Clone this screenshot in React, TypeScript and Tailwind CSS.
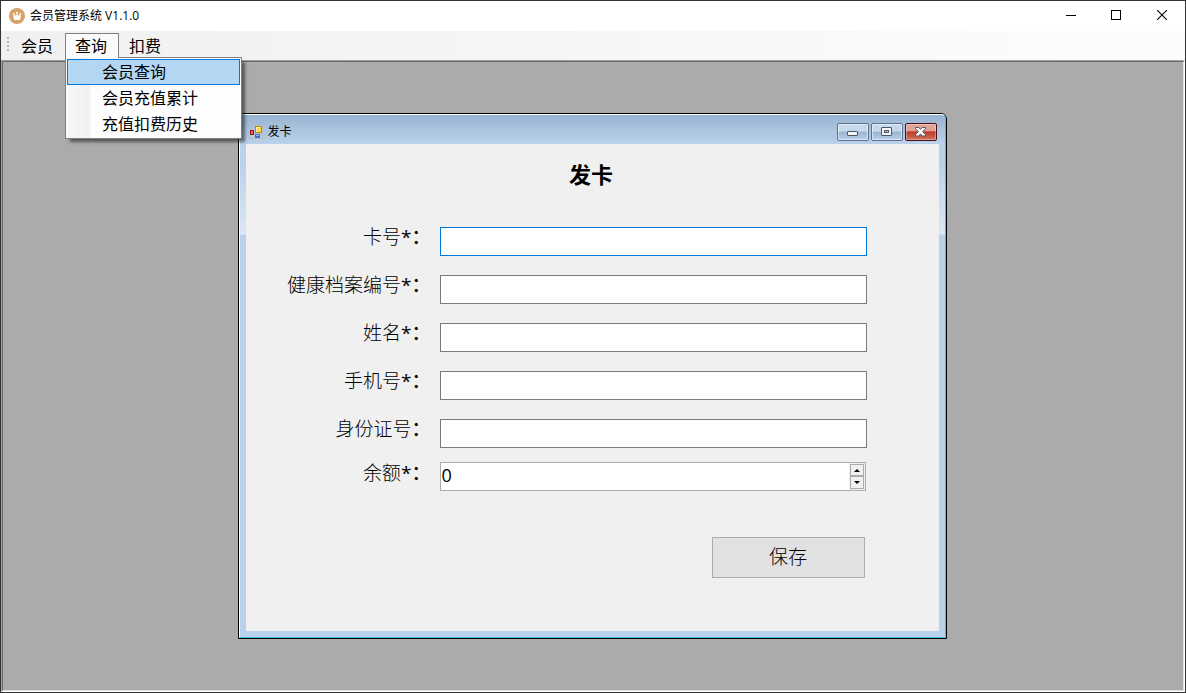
import React, { useState } from 'react';

const menus = ['会员', '查询', '扣费'];

const queryItems = ['会员查询', '会员充值累计', '充值扣费历史'];

const fields = [
  { id: 'cardNo', label: '卡号', mark: '*：', border: 'border-[#0078d7]' },
  { id: 'healthNo', label: '健康档案编号', mark: '*：', border: 'border-[#7a7a7a]' },
  { id: 'name', label: '姓名', mark: '*：', border: 'border-[#7a7a7a]' },
  { id: 'phone', label: '手机号', mark: '*：', border: 'border-[#7a7a7a]' },
  { id: 'idCard', label: '身份证号', mark: '：', border: 'border-[#7a7a7a]' },
];

const AppLogo: React.FC = () => (
  <svg width="16" height="16" viewBox="0 0 16 16" aria-hidden="true">
    <circle cx="8" cy="8" r="8" fill="#d8a167" />
    <path d="M4 7.2 6.2 7.6 8 6.2 9.8 7.6 12 7.2 11 12H5z" fill="#fff" />
    <circle cx="4.8" cy="6" r="1" fill="#fff" />
    <circle cx="8" cy="4.8" r="1.1" fill="#fff" />
    <circle cx="11.2" cy="6" r="1" fill="#fff" />
  </svg>
);

const FormLogo: React.FC = () => (
  <svg width="14" height="14" viewBox="0 0 14 14" aria-hidden="true">
    <rect x="0.5" y="0.5" width="13" height="13" fill="none" stroke="#bcbcbc" />
    <rect x="6.5" y="1.5" width="6" height="6" fill="#ffd84a" stroke="#b98a12" />
    <path d="M7.5 6.5v-4h4" fill="none" stroke="#fff0a8" />
    <rect x="1.5" y="5.5" width="3" height="4" fill="#e2665a" stroke="#a3160f" />
    <rect x="6" y="9" width="5" height="4" fill="#3f6fd0" />
    <path d="M7 10.5h3" stroke="#9fc0f5" />
  </svg>
);

const TitleBar: React.FC = () => (
  <header className="flex h-[30px] items-center bg-white pl-2">
    <AppLogo />
    <h1 className="ml-[5px] flex-1 text-[12px] leading-4 text-black">会员管理系统 V1.1.0</h1>
    <div className="flex h-full">
      <button type="button" aria-label="最小化" className="flex w-[45px] items-center justify-center">
        <svg width="10" height="10" viewBox="0 0 10 10">
          <path d="M0 4.5h10" stroke="#000" />
        </svg>
      </button>
      <button type="button" aria-label="最大化" className="flex w-[46px] items-center justify-center pb-[2px]">
        <svg width="10" height="10" viewBox="0 0 10 10">
          <rect x="0.5" y="0.5" width="9" height="9" fill="none" stroke="#000" />
        </svg>
      </button>
      <button type="button" aria-label="关闭" className="flex w-[46px] items-center justify-center pb-[2px]">
        <svg width="10" height="10" viewBox="0 0 10 10">
          <path d="M0 0l10 10M10 0L0 10" stroke="#000" strokeWidth="1.1" />
        </svg>
      </button>
    </div>
  </header>
);

const MenuBar: React.FC = () => (
  <nav className="flex h-[29px] items-start bg-linear-to-r from-[#f0f0f0] to-[#fdfdfd] pt-[2px] pl-[5px]">
    {/* Grip */}
    <svg width="3" height="15" viewBox="0 0 3 15" className="mt-1 mr-[2px]" aria-hidden="true">
      <path d="M2 0v15" stroke="#b8b8b8" strokeWidth="2" strokeDasharray="2 2" />
    </svg>
    {menus.map((menu) => (
      <div key={menu} className="relative">
        <button
          type="button"
          className={
            menu === '查询'
              ? 'h-[27px] w-[54px] border border-b-0 border-[#808080] bg-[#fafafa] pr-[2px] pb-[2px] text-[16px] leading-6'
              : 'h-[27px] w-[54px] border border-b-0 border-transparent pr-[2px] pb-[2px] text-[16px] leading-6'
          }
        >
          {menu}
        </button>
        {menu === '查询' && (
          <ul className="absolute top-[24px] left-0 z-20 w-[177px] border border-[#808080] bg-linear-to-r from-[#f8f8f8] from-0% via-[#f0f0f0] via-[24px] to-[#fdfdfd] to-[25px] p-px shadow-[4px_4px_3px_-1px_rgba(0,0,0,0.5)]">
            <li className="absolute -top-px left-0 h-px w-[52px] bg-[#fafafa]" aria-hidden="true" />
            {queryItems.map((item, i) => (
              <li key={item}>
                <button
                  type="button"
                  className={
                    i === 0
                      ? 'h-[26px] w-full border border-[#0078d7] bg-[#b3d7f3] pl-[34px] text-left text-[16px] leading-6'
                      : 'h-[26px] w-full border border-transparent pl-[34px] text-left text-[16px] leading-6'
                  }
                >
                  {item}
                </button>
              </li>
            ))}
          </ul>
        )}
      </div>
    ))}
  </nav>
);

const captionButton =
  'flex h-[18px] w-8 items-center justify-center rounded-[2px] border border-[#5c708f] bg-linear-to-b from-[#c6d8eb] from-45% via-[#98b4d2] via-50% to-[#bcd2ea] shadow-[inset_0_0_0_1px_rgba(255,255,255,0.5)]';

const closeButton =
  'flex h-[18px] w-8 items-center justify-center rounded-[2px] border border-[#44101c] bg-linear-to-b from-[#e3a397] from-40% via-[#b93a22] via-50% to-[#d3725c] shadow-[inset_0_0_0_1px_rgba(255,255,255,0.35)]';

const CardWindow: React.FC = () => {
  const [balance, setBalance] = useState(0);

  return (
    <section className="w-full max-w-[709px] rounded-t-[6px] border border-black bg-[#b9d1ea]">
      <div className="rounded-t-[5px] border border-t-white border-r-[#3cc0dc] border-b-[#3cc0dc] border-l-white bg-[linear-gradient(to_bottom,#99b4d1_0px,#b9d1ea_28px,#b9d1ea_50px,#dce8f5_119px,#b9d1ea_120px)] px-[6px] pb-[6px]">
        <div className="flex h-[29px] items-center gap-[5px] pt-1 pr-[2px] pl-[3px]">
          <FormLogo />
          <h2 className="flex-1 pt-px text-[12px] leading-4">发卡</h2>
          <div className="flex gap-[2px]">
            <button type="button" aria-label="最小化窗口" className={captionButton}>
              <svg width="12" height="12" viewBox="0 0 12 12">
                <rect x="0.5" y="5.5" width="10" height="4" rx="0.5" fill="#f5f5f5" stroke="#4b566b" />
              </svg>
            </button>
            <button type="button" aria-label="最大化窗口" className={captionButton}>
              <svg width="12" height="10" viewBox="0 0 12 10">
                <rect x="0.5" y="0.5" width="10" height="8" rx="0.5" fill="#f5f5f5" stroke="#4b566b" />
                <rect x="3.5" y="3.5" width="4" height="2" fill="#a8c0dc" stroke="#4b566b" />
              </svg>
            </button>
            <button type="button" aria-label="关闭窗口" className={closeButton}>
              <svg width="12" height="10" viewBox="0 0 12 10">
                <path
                  d="M.5.5h3.4L5.5 2.3 7.1.5h3.4v1L7.8 4.6l2.7 3v1.4H7.1L5.5 7.1 3.9 9H.5V7.6l2.7-3L.5 1.5z"
                  fill="#f5f5f5"
                  stroke="#4b566b"
                />
              </svg>
            </button>
          </div>
        </div>

        <form
          className="flex flex-col bg-[#f0f0f0] pt-[14px] pr-[72px] pb-[53px] font-light"
          onSubmit={(e) => e.preventDefault()}
        >
          <h3 className="mb-[37px] pl-[70px] text-center text-[22px] leading-8 font-bold">发卡</h3>

          <div className="flex flex-col gap-[19px]">
            {fields.map((field) => (
              <div key={field.id} className="flex gap-[9px]">
                <label htmlFor={field.id} className="w-[185px] text-right text-[19px] leading-5">
                  {field.label}
                  <span className="font-medium">{field.mark}</span>
                </label>
                <input
                  id={field.id}
                  type="text"
                  className={`h-[29px] min-w-0 flex-1 border ${field.border} bg-white px-1 text-[18px] outline-none`}
                />
              </div>
            ))}
          </div>

          <div className="mt-[14px] mr-px flex gap-[9px]">
            <label htmlFor="balance" className="w-[185px] pt-px text-right text-[19px] leading-5">
              余额
              <span className="font-medium">*：</span>
            </label>
            <div className="flex h-[29px] min-w-0 flex-1 border border-[#abadb3] bg-white">
              <input
                id="balance"
                type="number"
                value={balance}
                onChange={(e) => setBalance(Number(e.target.value))}
                className="h-6 min-w-0 flex-1 appearance-none pl-px text-[18px] leading-6 font-normal outline-none [-moz-appearance:textfield] [&::-webkit-inner-spin-button]:appearance-none"
              />
              <div className="flex flex-col bg-[#f0f0f0] p-px">
                <button
                  type="button"
                  aria-label="增加"
                  onClick={() => setBalance(balance + 1)}
                  className="flex h-[12px] w-[14px] items-center justify-center border border-[#acacac] bg-[#f0f0f0]"
                >
                  <svg width="6" height="3" viewBox="0 0 6 3">
                    <path d="M0 3 3 0 6 3z" />
                  </svg>
                </button>
                <button
                  type="button"
                  aria-label="减少"
                  onClick={() => setBalance(Math.max(0, balance - 1))}
                  className="flex h-[13px] w-[14px] items-center justify-center border border-[#acacac] bg-[#f0f0f0]"
                >
                  <svg width="6" height="3" viewBox="0 0 6 3">
                    <path d="M0 0 3 3 6 0z" />
                  </svg>
                </button>
              </div>
            </div>
          </div>

          <button
            type="submit"
            className="mt-[46px] mr-[2px] h-[41px] w-[153px] self-end border border-[#adadad] bg-[#e1e1e1] pb-[2px] text-[19px] leading-6"
          >
            保存
          </button>
        </form>
      </div>
    </section>
  );
};

const App: React.FC = () => {
  return (
    <div className="flex min-h-screen flex-col border border-[#333] bg-white font-['Open_Sans','Noto_Sans_CJK_SC',sans-serif] text-black">
      <TitleBar />
      <MenuBar />
      <main className="flex flex-1 flex-col border border-t-[#a0a0a0] border-r-white border-b-white border-l-[#a0a0a0]">
        <div className="flex flex-1 items-start justify-center border border-t-[#696969] border-r-[#e3e3e3] border-b-[#e3e3e3] border-l-[#696969] bg-[#ababab] pt-[51px] pr-[2px] pb-[51px]">
          <CardWindow />
        </div>
      </main>
    </div>
  );
};

export default App;
